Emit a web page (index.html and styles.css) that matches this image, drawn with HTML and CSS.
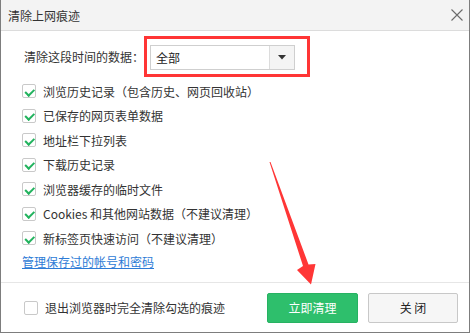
FILE: index.html
```html
<!DOCTYPE html>
<html lang="zh-CN">
<head>
<meta charset="utf-8">
<title>清除上网痕迹</title>
<link rel="stylesheet" href="styles.css">
</head>
<body>
<div class="dialog">
  <div class="titlebar">
    <span class="title">清除上网痕迹</span>
    <svg class="close-x" width="12" height="12" viewBox="0 0 12 12"><path d="M0.5 0.5 L11.5 11.5 M11.5 0.5 L0.5 11.5" stroke="#6b6b6b" stroke-width="1.1" fill="none"/></svg>
  </div>
  <div class="content">
    <div class="range-row">
      <span class="range-label">清除这段时间的数据：</span>
      <div class="highlight">
        <div class="select">
          <span class="select-value">全部</span>
          <span class="select-btn"><svg width="8" height="5" viewBox="0 0 8 5"><path d="M0 0 H8 L4 4.5 Z" fill="#333"/></svg></span>
        </div>
      </div>
    </div>
    <ul class="options">
      <li class="option"><span class="cb checked"></span><span>浏览历史记录（包含历史、网页回收站）</span></li>
      <li class="option"><span class="cb checked"></span><span>已保存的网页表单数据</span></li>
      <li class="option"><span class="cb checked"></span><span>地址栏下拉列表</span></li>
      <li class="option"><span class="cb checked"></span><span>下载历史记录</span></li>
      <li class="option"><span class="cb checked"></span><span>浏览器缓存的临时文件</span></li>
      <li class="option"><span class="cb checked"></span><span>Cookies 和其他网站数据（不建议清理）</span></li>
      <li class="option"><span class="cb checked"></span><span>新标签页快速访问（不建议清理）</span></li>
    </ul>
    <div class="manage-row"><a class="manage" href="#">管理保存过的帐号和密码</a></div>
  </div>
  <div class="footer">
    <label class="exit-opt"><span class="cb"></span><span>退出浏览器时完全清除勾选的痕迹</span></label>
    <div class="buttons">
      <button class="btn btn-primary">立即清理</button>
      <button class="btn btn-default">关 闭</button>
    </div>
  </div>
  <svg class="arrow" width="470" height="333" viewBox="0 0 470 333">
    <polygon points="269.5,162 303,266 297,270 311,284.5 315.5,264 308.5,264.5 270.5,162" fill="#ff3636"/>
  </svg>
</div>
</body>
</html>
```
FILE: styles.css
```css
* { box-sizing: border-box; }
html, body { margin: 0; padding: 0; }
body {
  font-family: "Noto Sans CJK SC", "Microsoft YaHei", sans-serif;
  font-size: 12px;
  color: #333;
  background: #fff;
}
.dialog {
  position: relative;
  width: 470px;
  height: 333px;
  border: 1px solid #7d7d7d;
  border-top: none;
  display: flex;
  flex-direction: column;
  background: #fff;
}
.titlebar {
  height: 31px;
  flex: none;
  background: #f3f3f3;
  border-bottom: 1px solid #dcdcdc;
  display: flex;
  align-items: center;
  justify-content: space-between;
  padding: 0 6px 0 7px;
}
.title { font-size: 12px; color: #333; }
.close-x { display: block; }
.content {
  flex: 1;
  padding: 5px 0 0 0;
}
.range-row {
  display: flex;
  align-items: center;
  height: 41px;
  padding-left: 23px;
}
.range-label {
  flex: none;
  white-space: nowrap;
  width: 120px;
}
.highlight {
  flex: none;
  width: 166px;
  height: 41px;
  border: 3px solid #ff3535;
  padding: 6px 0 0 3px;
}
.select {
  width: 145px;
  height: 25px;
  border: 1px solid #cfcfcf;
  display: flex;
  background: #fff;
}
.select-value {
  flex: 1;
  display: flex;
  align-items: center;
  padding-left: 5px;
  color: #222;
}
.select-btn {
  width: 25px;
  border-left: 1px solid #dcdcdc;
  background: #f4f4f4;
  display: flex;
  align-items: center;
  justify-content: center;
}
.select-btn svg { display: block; }
.options {
  list-style: none;
  margin: 2px 0 0 0;
  padding: 0 0 0 21px;
}
.option {
  height: 24.5px;
  display: flex;
  align-items: center;
  gap: 7px;
}
.cb {
  width: 14px;
  height: 14px;
  flex: none;
  border: 1px solid #c9c9c9;
  border-radius: 2px;
  background: #fff;
  position: relative;
}
.cb.checked::after {
  content: "";
  position: absolute;
  left: 3.5px;
  top: 1.5px;
  width: 3.5px;
  height: 6.5px;
  border-right: 2px solid #22b35e;
  border-bottom: 2px solid #22b35e;
  transform: rotate(45deg);
}
.manage-row {
  height: 22px;
  display: flex;
  align-items: center;
  padding-left: 21px;
}
.manage {
  color: #2d7bd6;
  text-decoration: underline;
}
.footer {
  height: 50px;
  flex: none;
  border-top: 1px solid #e6e6e6;
  display: flex;
  align-items: center;
  justify-content: space-between;
  padding: 0 11px 0 23px;
}
.exit-opt {
  display: flex;
  align-items: center;
  gap: 7px;
}
.buttons {
  display: flex;
  gap: 10px;
}
.btn {
  font-family: inherit;
  font-size: 12px;
  height: 30px;
  border-radius: 2px;
  cursor: pointer;
}
.btn-primary {
  width: 91px;
  background: #2ebf6c;
  border: 1px solid #27b262;
  color: #fff;
}
.btn-default {
  width: 90px;
  background: #f6f6f6;
  border: 1px solid #c8c8c8;
  color: #222;
}
.arrow {
  position: absolute;
  left: -1px;
  top: 0;
  pointer-events: none;
}
```
